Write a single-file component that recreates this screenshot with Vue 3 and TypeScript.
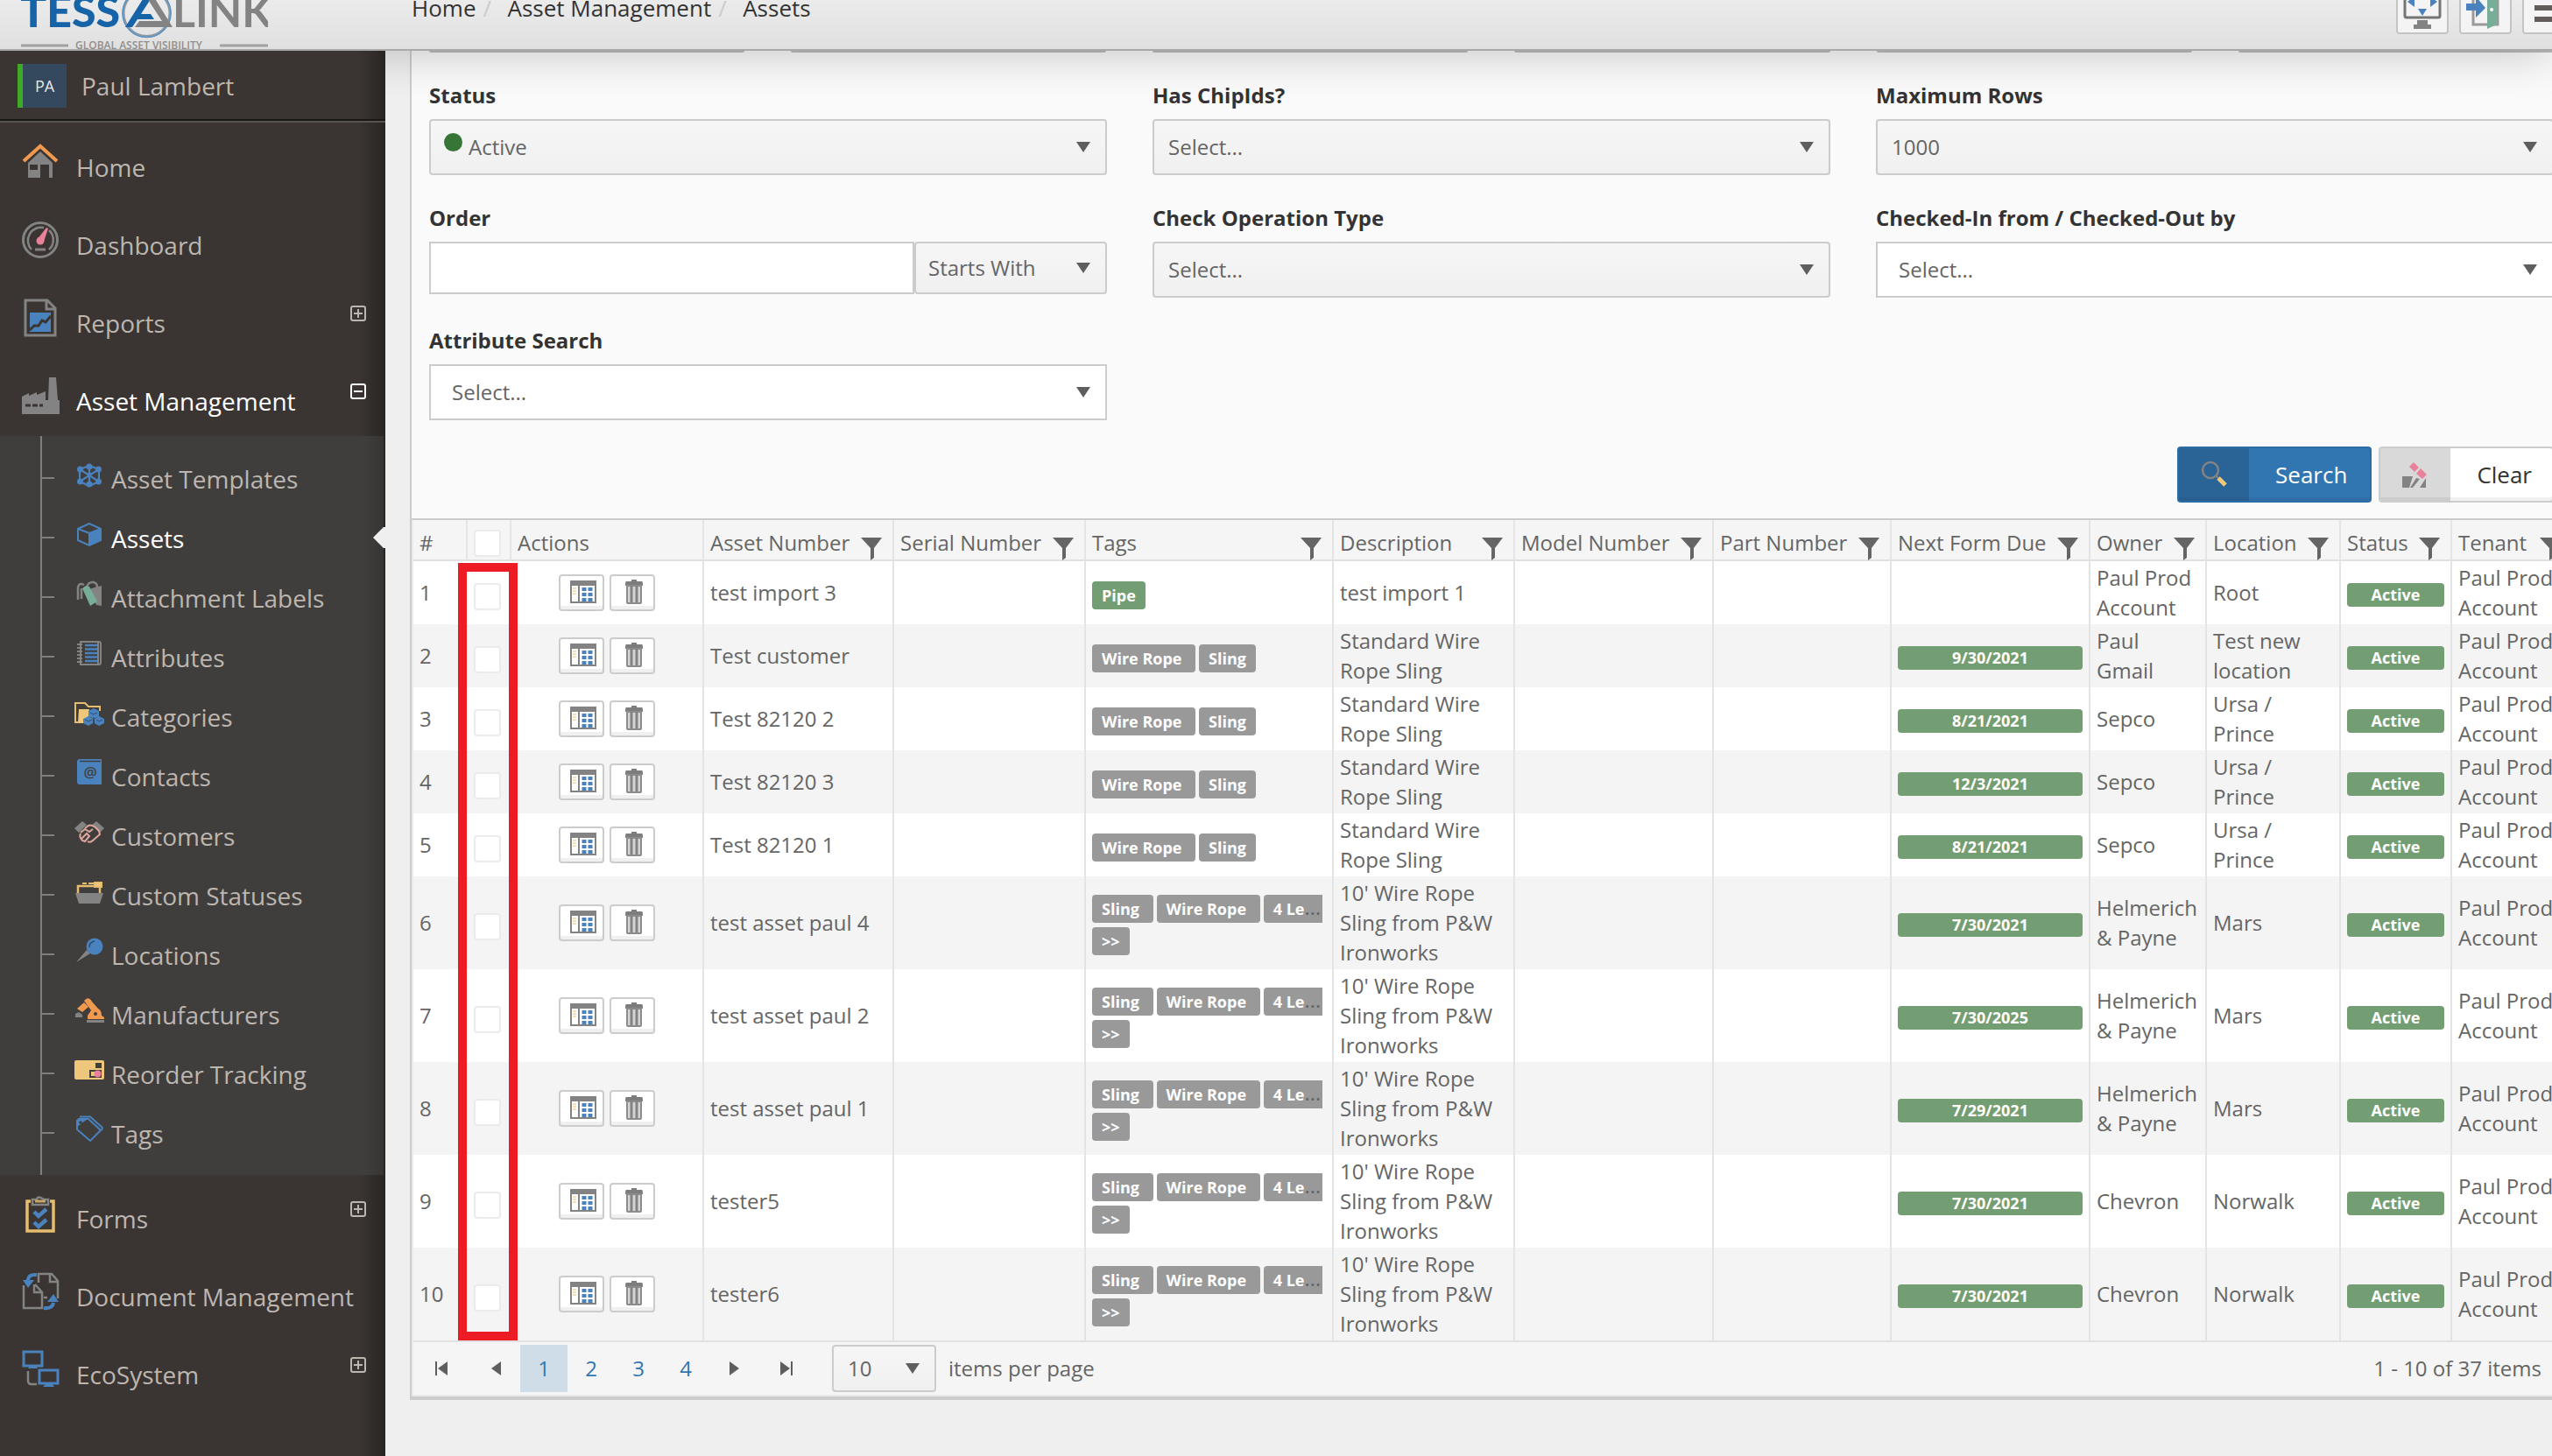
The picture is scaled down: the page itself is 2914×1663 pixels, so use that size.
<script setup lang="ts">
interface NavItem {
  label: string
  icon: string
  toggle?: 'plus' | 'minus'
  active?: boolean
}

interface AssetRow {
  id: number
  name: string
  tags: string[]
  more?: boolean
  green?: boolean
  description: string
  due: string
  owner: string
  location: string
}

const icons: Record<string, string> = {
  home: '<g transform="translate(0,1)"><path d="M2 20 21 3 40 20" fill="none" stroke="#f09a4f" stroke-width="4"/><path fill="#838383" fill-rule="evenodd" d="M21 9 35 22v17h-4V24H21v15H7V22zM9 24v6h9v-6z"/></g>',
  dashboard: '<circle cx="21" cy="22" r="19.5" fill="none" stroke="#838383" stroke-width="3"/><path d="M11 33A15 15 0 0 1 25 8M31 11A15 15 0 0 1 31 33" fill="none" stroke="#838383" stroke-width="2.5"/><path d="M15 33h12" stroke="#838383" stroke-width="3"/><path d="M17 22 28 8 30 9 25 24z" fill="#e8829a"/><circle cx="21" cy="23" r="4.5" fill="#e8829a"/>',
  reports: '<path d="M4 2h25l9 9v31H4z" fill="none" stroke="#838383" stroke-width="3"/><path d="M28 2v10h10" fill="none" stroke="#838383" stroke-width="3"/><path d="M9 16h24v22H9z" fill="#4a82bd"/><path d="M9 36l5-5h5l4-6 4 2 6-7" fill="none" stroke="#3a3532" stroke-width="3"/>',
  factory: '<path d="M0 23 8 19v3l9-4v3l10-4v10h3L31 1h8l2 26h2v16H0z" fill="#838383"/><path d="M4 33h20" stroke="#3a3532" stroke-width="3" stroke-dasharray="6 2"/>',
  forms: '<path d="M10 8H6v34h30V8h-4" fill="none" stroke="#e6bd6f" stroke-width="3.5"/><path d="M12 12V6h5q1-5 8 0h5v6z" fill="none" stroke="#838383" stroke-width="2.5"/><path d="M15 8h12" stroke="#c6a765" stroke-width="3"/><path d="m14 20 5 5 9-8M14 32l5 5 9-8" fill="none" stroke="#4a82bd" stroke-width="4.5"/>',
  documents: '<path d="M2 15v26h21V23l-8-9M14 14v9h9" fill="none" stroke="#838383" stroke-width="2.5"/><path d="M19 12V2h15l7 8v20M32 2v9h9M25 29h4" fill="none" stroke="#838383" stroke-width="2.5"/><path d="M17 3q-10-1-10 7" fill="none" stroke="#4a82bd" stroke-width="4"/><path d="M1 9h13l-7 9z" fill="#4a82bd"/><path d="M25 41q10 1 11-6" fill="none" stroke="#4a82bd" stroke-width="4"/><path d="m29 34 7-9 6 9z" fill="#4a82bd"/>',
  ecosystem: '<path d="M2 2h21v16H2z" fill="none" stroke="#4a82bd" stroke-width="3"/><path d="M7 21h11l-2-3H9zM24 42h13l-2-3h-8z" fill="#4a82bd"/><path d="M20 23h21v15H20z" fill="none" stroke="#4a82bd" stroke-width="3"/><path d="M7 24v11q0 4 4 4h6" fill="none" stroke="#838383" stroke-width="2.5"/>',
  templates: '<path d="M18 8 7 12v14l11 5 11-5V12zM7 12l11 7 11-7M18 19v12M7 26l11-7 11 7M18 8v11" fill="none" stroke="#4a82bd" stroke-width="2.2"/><g fill="#4a82bd"><circle cx="18" cy="9" r="3.5"/><circle cx="7.500" cy="12" r="3.5"/><circle cx="28.500" cy="12" r="3.5"/><circle cx="7.500" cy="26" r="3.5"/><circle cx="28.500" cy="26" r="3.5"/><circle cx="18" cy="29" r="3.5"/><circle cx="18" cy="18" r="2.5"/></g>',
  assets: '<path d="M18 6 5 12v13l13 6 13-6V12zM5 12l13 5 13-5M18 17v14" fill="none" stroke="#4a82bd" stroke-width="2"/><path d="m18 17 13-5v13l-13 6z" fill="#4a82bd"/>',
  labels: '<path d="M5 25V11q1-6 7-3M9 24V12M15 12q1-8 8-7 6 2 3 9" fill="none" stroke="#838383" stroke-width="2.5"/><path d="M24 11l8-2v23l-6-1-8-18z" fill="#838383"/><path d="m10 12 4-3 4 1 9 17-8 5z" fill="#78ae98"/>',
  attributes: '<path d="M8 5h21q2 0 2 2v22q0 2-2 2H8zM28 5v26" fill="none" stroke="#838383" stroke-width="2"/><path d="M4 8h6M4 12h6M4 16h6M4 20h6M4 24h6M4 28h6" stroke="#838383" stroke-width="2"/><path d="M13 9h14M13 13.500h14M13 18h14M13 22.500h14M13 27h14" stroke="#4a82bd" stroke-width="2.500"/>',
  categories: '<path d="M5 29H2V7h11l4 4h13v5" fill="none" stroke="#e6bd6f" stroke-width="2"/><path d="M6 14h12l-2 16H5z" fill="#efc77c"/><path d="m23 13 6 3v6l-6 3-6-3v-6zM17 22l5 3v5l-5 3-6-3v-5zM29 22l6 3v5l-6 3-5-3v-5z" fill="#4a82bd"/><path d="m13 26 4 2 4-2M26 26l3 2 4-2M19 18l4 2 4-2M23 23v9" fill="none" stroke="#2d4f73" stroke-width="1"/>',
  contacts: '<path d="M6 3h26v29H7q-3 0-3-3V5z" fill="#4a82bd"/><path d="M7 5.500h24" stroke="#403e3c" stroke-width="1.500"/><text x="19" y="24" text-anchor="middle" font-family="Open Sans, sans-serif" font-size="17" font-weight="600" fill="#403e3c">@</text>',
  customers: '<path d="m1 14 9-8 5 4-9 9zM35 14l-9-8-5 4 9 9z" fill="#838383"/><path d="m13 14 4-3q5-2 12 6l1 4-8 7q-3 3-6 1M8 19l5-4 5 3 4-3M8 20q-2 4 2 8l3 1 5-6-3-3-6 6" fill="none" stroke="#dfa79b" stroke-width="2"/>',
  statuses: '<path d="M5 20V12h25v8" fill="none" stroke="#e6bd6f" stroke-width="2.500"/><path d="M10 9h5M17 9h6M24 8h8v5h-8z" stroke="#e6bd6f" stroke-width="2" fill="#efc77c"/><path d="M2 20h32l-4 12H6z" fill="#838383"/>',
  locations: '<path d="M3 31 15 17l4 4z" fill="#838383"/><circle cx="24" cy="13" r="9.500" fill="#4a82bd"/><path d="M18 14q0-6 6-7" fill="none" stroke="#294b70" stroke-width="1.500"/>',
  manufacturers: '<path d="m4 16 8-7 5 5-7 6zM12 7q5-6 9 1l7 8q4 2 4 8l3 2v2H16v-4l4-6z" fill="#f09a4f"/><path d="M2 26v-4l4-2 4 3v3M15 29h20v3H15z" fill="#838383"/><circle cx="25" cy="22" r="2" fill="#403e3c"/>',
  reorder: '<rect x="1" y="7" width="34" height="22" rx="2" fill="#efc77c"/><path d="M25 10h7v6h-7zM18 18h14v9H18z" fill="#403e3c"/><path d="M20 20h4v5h-4z" fill="#efc77c"/><circle cx="27.500" cy="22.500" r="4" fill="#e8829a"/>',
  tags: '<path d="M4 8v10l15 13 12-12L17 6H6z" fill="none" stroke="#4a82bd" stroke-width="2"/><path d="M4 15V8l2-2h10z" fill="#4a82bd"/><path d="M7 3.500h12L33 16l-1 3" fill="none" stroke="#4a82bd" stroke-width="2"/><circle cx="8" cy="10" r="1.800" fill="#403e3c"/>'
}

const topItems: NavItem[] = [
  { label: 'Home', icon: 'home' },
  { label: 'Dashboard', icon: 'dashboard' },
  { label: 'Reports', icon: 'reports', toggle: 'plus' },
  { label: 'Asset Management', icon: 'factory', toggle: 'minus', active: true }
]

const subItems: NavItem[] = [
  { label: 'Asset Templates', icon: 'templates' },
  { label: 'Assets', icon: 'assets', active: true },
  { label: 'Attachment Labels', icon: 'labels' },
  { label: 'Attributes', icon: 'attributes' },
  { label: 'Categories', icon: 'categories' },
  { label: 'Contacts', icon: 'contacts' },
  { label: 'Customers', icon: 'customers' },
  { label: 'Custom Statuses', icon: 'statuses' },
  { label: 'Locations', icon: 'locations' },
  { label: 'Manufacturers', icon: 'manufacturers' },
  { label: 'Reorder Tracking', icon: 'reorder' },
  { label: 'Tags', icon: 'tags' }
]

const bottomItems: NavItem[] = [
  { label: 'Forms', icon: 'forms', toggle: 'plus' },
  { label: 'Document Management', icon: 'documents' },
  { label: 'EcoSystem', icon: 'ecosystem', toggle: 'plus' }
]

const columns = [
  { label: 'Asset Number', cls: 'w-asset' },
  { label: 'Serial Number', cls: 'w-serial' },
  { label: 'Tags', cls: 'w-tags' },
  { label: 'Description', cls: 'w-desc' },
  { label: 'Model Number', cls: 'w-model' },
  { label: 'Part Number', cls: 'w-part' },
  { label: 'Next Form Due', cls: 'w-due' },
  { label: 'Owner', cls: 'w-owner' },
  { label: 'Location', cls: 'w-loc' },
  { label: 'Status', cls: 'w-status' },
  { label: 'Tenant', cls: 'w-tenant' }
]

const std = 'Standard Wire Rope Sling'
const ten = "10' Wire Rope Sling from P&W Ironworks"
const pair = ['Wire Rope', 'Sling']
const trio = ['Sling', 'Wire Rope', '4 Legs']

const rows: AssetRow[] = [
  { id: 1, name: 'test import 3', tags: ['Pipe'], green: true, description: 'test import 1', due: '', owner: 'Paul Prod Account', location: 'Root' },
  { id: 2, name: 'Test customer', tags: pair, description: std, due: '9/30/2021', owner: 'Paul Gmail', location: 'Test new location' },
  { id: 3, name: 'Test 82120 2', tags: pair, description: std, due: '8/21/2021', owner: 'Sepco', location: 'Ursa / Prince' },
  { id: 4, name: 'Test 82120 3', tags: pair, description: std, due: '12/3/2021', owner: 'Sepco', location: 'Ursa / Prince' },
  { id: 5, name: 'Test 82120 1', tags: pair, description: std, due: '8/21/2021', owner: 'Sepco', location: 'Ursa / Prince' },
  { id: 6, name: 'test asset paul 4', tags: trio, more: true, description: ten, due: '7/30/2021', owner: 'Helmerich & Payne', location: 'Mars' },
  { id: 7, name: 'test asset paul 2', tags: trio, more: true, description: ten, due: '7/30/2025', owner: 'Helmerich & Payne', location: 'Mars' },
  { id: 8, name: 'test asset paul 1', tags: trio, more: true, description: ten, due: '7/29/2021', owner: 'Helmerich & Payne', location: 'Mars' },
  { id: 9, name: 'tester5', tags: trio, more: true, description: ten, due: '7/30/2021', owner: 'Chevron', location: 'Norwalk' },
  { id: 10, name: 'tester6', tags: trio, more: true, description: ten, due: '7/30/2021', owner: 'Chevron', location: 'Norwalk' }
]

const tagText = (tags: string[], i: number) => (i < tags.length - 1 ? tags[i] + ' ' : tags[i])
</script>

<template>
  <div class="app">
    <header class="topbar">
      <div class="topbar-inner">
        <svg class="logo" viewBox="0 0 282 76" role="img" aria-label="TessaLink">
          <text x="-1" y="51" font-family="Lato, sans-serif" font-size="50" font-weight="900" fill="#1763a8">TESS</text>
          <circle cx="143.500" cy="35" r="26.500" fill="none" stroke="#8d9aa5" stroke-width="3" />
          <circle cx="143.500" cy="35" r="27.500" fill="none" stroke="#5b93c6" stroke-width="1.500" />
          <path d="M119 51 146 8h9l-18 28h11l4 6h-19l-6 9z" fill="#1763a8" />
          <path d="m144 18 5-6 24 39h-43l5-7h26z" fill="#838383" />
          <text x="173" y="51" font-family="Lato, sans-serif" font-size="50" font-weight="700" fill="#838383">LINK</text>
          <text x="62" y="76" font-family="Open Sans, sans-serif" font-size="12" font-weight="600" fill="#8f8f8f">GLOBAL ASSET VISIBILITY</text>
          <path d="M0 72h54M227 72h55" stroke="#a0a0a0" stroke-width="3" />
        </svg>
        <nav class="crumbs" aria-label="Breadcrumb">
          <a href="#">Home</a><i>/</i><a href="#">Asset Management</a><i>/</i><a href="#">Assets</a>
        </nav>
        <div class="tools">
          <button type="button" aria-label="Full screen">
            <svg viewBox="0 0 56 56">
              <path d="M8 4v26q0 2 2 2h36q2 0 2-2V4" transform="translate(0,10)" fill="none" stroke="#757575" stroke-width="3" />
              <path d="M22 45h12v5h4v5H18v-5h4z" fill="#838383" />
              <path d="m11 24 8-6v12zM45 24l-8-6v12zM28 40l-5-8h10z" fill="#4a82bd" />
            </svg>
          </button>
          <button type="button" aria-label="Sign out">
            <svg viewBox="0 0 56 56">
              <path d="M14 14v36h28V14" fill="none" stroke="#9a9a9a" stroke-width="3" />
              <path d="M30 10h11v40l-11 5z" fill="#78ae98" />
              <path d="M6 26h11v-8l11 13-11 11v-8H6z" fill="#4a82bd" />
              <circle cx="35" cy="33" r="2" fill="#fff" />
            </svg>
          </button>
          <button type="button" aria-label="Menu">
            <svg viewBox="0 0 56 56">
              <path d="M12 18h32M12 31h32M12 44h32" stroke="#625d5a" stroke-width="6" />
            </svg>
          </button>
        </div>
      </div>
    </header>

    <div class="body">
      <aside class="sidebar">
        <div class="user">
          <span class="avatar">PA</span>
          <span>Paul Lambert</span>
        </div>
        <nav class="nav" aria-label="Main">
          <a v-for="n in topItems" :key="n.label" href="#" class="nav-item" :class="{ on: n.active }">
            <svg class="nav-icon" viewBox="-1 0 44 44" v-html="icons[n.icon]" />
            <span class="nav-text">{{ n.label }}</span>
            <svg v-if="n.toggle" class="toggle" viewBox="0 0 18 18">
              <rect x="1" y="1" width="16" height="16" rx="2" /><path d="M4 9h10" /><path v-if="n.toggle === 'plus'" d="M9 4v10" />
            </svg>
          </a>
        </nav>
        <nav class="subnav" aria-label="Asset Management">
          <a v-for="n in subItems" :key="n.label" href="#" class="sub-item" :class="{ on: n.active }">
            <svg class="sub-icon" viewBox="0 0 36 36" v-html="icons[n.icon]" />
            <span class="sub-text">{{ n.label }}</span>
          </a>
        </nav>
        <nav class="nav lower" aria-label="More">
          <a v-for="n in bottomItems" :key="n.label" href="#" class="nav-item">
            <svg class="nav-icon" viewBox="-1 0 44 44" v-html="icons[n.icon]" />
            <span class="nav-text">{{ n.label }}</span>
            <svg v-if="n.toggle" class="toggle" viewBox="0 0 18 18">
              <rect x="1" y="1" width="16" height="16" rx="2" /><path d="M4 9h10" /><path d="M9 4v10" />
            </svg>
          </a>
        </nav>
      </aside>

      <main class="main">
        <section class="panel">
          <form class="filters" @submit.prevent>
            <div class="cut-row"><span v-for="i in 6" :key="i" /></div>
            <div class="grid">
              <div class="field">
                <label for="status">Status</label>
                <div class="pick dot"><select id="status"><option>Active</option></select></div>
              </div>
              <div class="field">
                <label for="chip">Has ChipIds?</label>
                <div class="pick"><select id="chip"><option>Select...</option></select></div>
              </div>
              <div class="field">
                <label for="max">Maximum Rows</label>
                <div class="pick"><select id="max"><option>1000</option></select></div>
              </div>
              <div class="field">
                <label for="order">Order</label>
                <div class="combo">
                  <input id="order" type="text" />
                  <div class="pick short"><select aria-label="Order match"><option>Starts With</option></select></div>
                </div>
              </div>
              <div class="field">
                <label for="op">Check Operation Type</label>
                <div class="pick"><select id="op"><option>Select...</option></select></div>
              </div>
              <div class="field">
                <label for="checked">Checked-In from / Checked-Out by</label>
                <div class="pick white"><select id="checked"><option>Select...</option></select></div>
              </div>
              <div class="field">
                <label for="attr">Attribute Search</label>
                <div class="pick white"><select id="attr"><option>Select...</option></select></div>
              </div>
            </div>
            <div class="actions">
              <button type="submit" class="btn primary">
                <span class="btn-icon">
                  <svg viewBox="0 0 32 32"><ellipse cx="12" cy="11" rx="9" ry="9" fill="none" stroke="#838383" stroke-width="2.500" /><path d="m18 17 3 3" stroke="#838383" stroke-width="2" /><path d="m21 20 8 8" stroke="#efc77c" stroke-width="5" /></svg>
                </span>
                <span class="btn-text">Search</span>
              </button>
              <button type="reset" class="btn plain">
                <span class="btn-icon">
                  <svg viewBox="0 0 32 32"><path d="M1 18h12L9 31H1zM17 20l4 1-8 10h-3zM28 20v11h-7z" fill="#838383" /><path d="m14 2 6 6-5 5-6-6zM22 9l7 7-5 5-7-6z" fill="#e8829a" /></svg>
                </span>
                <span class="btn-text">Clear</span>
              </button>
            </div>
          </form>

          <div class="gridbox">
            <div class="table-wrap">
              <table>
                <colgroup>
                  <col class="w-num" /><col class="w-check" /><col class="w-actions" />
                  <col v-for="c in columns" :key="c.label" :class="c.cls" />
                </colgroup>
                <thead>
                  <tr>
                    <th scope="col">#</th>
                    <th scope="col" class="check"><input type="checkbox" aria-label="Select all" /></th>
                    <th scope="col">Actions</th>
                    <th v-for="c in columns" :key="c.label" scope="col">
                      <div class="head">
                        <span>{{ c.label }}</span>
                        <svg class="funnel" viewBox="0 0 24 26"><path d="M0 0h24l-9 12v11l-4 3V12z" fill="#656565" /></svg>
                      </div>
                    </th>
                  </tr>
                </thead>
                <tbody>
                  <tr v-for="r in rows" :key="r.id">
                    <td>{{ r.id }}</td>
                    <td class="check"><input type="checkbox" :aria-label="'Select ' + r.name" /></td>
                    <td class="noline">
                      <div class="row-actions">
                        <button type="button" aria-label="Details">
                          <svg class="ic-details" viewBox="0 0 30 26"><path d="M1 1h28v24H1z" fill="#fff" stroke="#838383" stroke-width="2" /><path d="M0 0h30v6H0zM9 5h2v21H9z" fill="#838383" /><path d="M3 9h4M3 12h4M3 15h4" stroke="#e6bd6f" /><path d="M16 8v16M23 8v16" stroke="#4a82bd" stroke-width="5" stroke-dasharray="4 2" /></svg>
                        </button>
                        <button type="button" aria-label="Delete">
                          <svg class="ic-trash" viewBox="0 0 22 28"><path d="M8 0h6v2h6q1 0 1 5H1q0-5 1-5h6z" fill="#7d7d7d" /><path d="M3 7h16v19q0 1-1 1H4q-1 0-1-1z" fill="#d4d4d4" stroke="#8c8c8c" stroke-width="2" /><path d="M8 7v19M14 7v19" stroke="#838383" stroke-width="3" /></svg>
                        </button>
                      </div>
                    </td>
                    <td>{{ r.name }}</td>
                    <td></td>
                    <td class="tag-cell">
                      <div class="tags"><span v-for="(t, i) in r.tags" :key="t" class="tag" :class="{ green: r.green }">{{ tagText(r.tags, i) }}</span></div>
                      <div v-if="r.more" class="tags"><a href="#" class="tag">&gt;&gt;</a></div>
                    </td>
                    <td>{{ r.description }}</td>
                    <td></td>
                    <td></td>
                    <td><span v-if="r.due" class="badge">{{ r.due }}</span></td>
                    <td>{{ r.owner }}</td>
                    <td>{{ r.location }}</td>
                    <td><span class="badge">Active</span></td>
                    <td>Paul Prod Account</td>
                  </tr>
                </tbody>
              </table>
              <div class="marker"></div>
            </div>
            <div class="pager">
              <button type="button" class="wide" aria-label="First page"><svg viewBox="0 0 16 16"><path d="M1 0h2v16H1zM15 0v16L4 8z" /></svg></button>
              <button type="button" class="wide" aria-label="Previous page"><svg viewBox="0 0 16 16"><path d="M16 0v16L5 8z" /></svg></button>
              <button type="button" class="current">1</button>
              <button type="button">2</button>
              <button type="button">3</button>
              <button type="button">4</button>
              <button type="button" aria-label="Next page"><svg viewBox="0 0 16 16"><path d="M4 0v16l11-8z" /></svg></button>
              <button type="button" class="last" aria-label="Last page"><svg viewBox="0 0 16 16"><path d="M13 0h2v16h-2zM1 0v16l11-8z" /></svg></button>
              <div class="pick size"><select id="size"><option>10</option></select></div>
              <label for="size">items per page</label>
              <span class="range">1 - 10 of 37 items</span>
            </div>
          </div>
        </section>
      </main>
    </div>
  </div>
</template>

<style>
body {
  background: #efefef;
  overflow: hidden;
}
</style>

<style scoped>
* {
  box-sizing: border-box;
}

.app {
  display: flex;
  flex-direction: column;
  min-height: 100vh;
  overflow: hidden;
  font-family: "Open Sans", "Noto Sans", sans-serif;
  font-size: 24px;
  line-height: 34px;
  color: #656565;
}

a {
  color: inherit;
  text-decoration: none;
}

button,
select,
input {
  font: inherit;
  color: inherit;
  margin: 0;
}

/* Top bar */
.topbar {
  position: relative;
  z-index: 3;
  height: 58px;
  display: flex;
  align-items: flex-end;
  background: linear-gradient(#ebebeb, #e0e0e0);
  border-bottom: 2px solid #a9a9a9;
  box-shadow: 0 4px 52px rgba(0, 0, 0, 0.21);
  clip-path: inset(0 0 -80px 0);
}

.topbar-inner {
  flex: 1;
  display: flex;
  align-items: flex-end;
  height: 76px;
  margin: -20px -26px 0 0;
}

.logo {
  width: 282px;
  height: 76px;
  margin-left: 24px;
  overflow: hidden;
}

.crumbs {
  display: flex;
  margin: 0 0 30px 164px;
  font-size: 26px;
  color: #333;
}

.crumbs i {
  width: 36px;
  padding-left: 8px;
  font-style: normal;
  color: #ccc;
}

.tools {
  display: flex;
  gap: 12px;
  margin: 0 0 17px auto;
}

.tools button {
  width: 60px;
  height: 60px;
  padding: 0;
  border: 2px solid #c4c4c4;
  border-radius: 4px;
  background: #f4f4f4;
}

.tools svg {
  display: block;
  width: 56px;
  height: 56px;
  margin-top: -6px;
}

.body {
  flex: 1;
  display: flex;
}

/* Sidebar */
.sidebar {
  position: relative;
  z-index: 4;
  flex: none;
  width: 440px;
  background: linear-gradient(90deg, transparent 410px, rgba(0, 0, 0, 0.3)), #3a3532;
  color: #bdb6b0;
  font-size: 28px;
  line-height: 38px;
}

.user {
  display: flex;
  align-items: center;
  gap: 17px;
  height: 82px;
  padding: 0 0 0 20px;
  border-bottom: 2px solid #565453;
  box-shadow: inset 0 -2px #1a1715;
}

.avatar {
  width: 56px;
  height: 50px;
  border-left: 6px solid #3fab25;
  background: #34495e;
  color: #e8e8e8;
  font-size: 18px;
  line-height: 50px;
  text-align: center;
}

.nav {
  padding: 1px 0;
}

.nav.lower {
  padding: 0;
}

.nav-item {
  display: flex;
  align-items: center;
  height: 89px;
  padding: 0 22px 0 24px;
}

.nav-icon {
  width: 44px;
  height: 44px;
  margin-bottom: 2px;
}

.nav-text {
  flex: 1;
  padding: 10px 0 0 19px;
  white-space: nowrap;
}

.on .nav-text,
.on .sub-text {
  color: #fff;
}

.toggle {
  width: 18px;
  height: 18px;
  margin-bottom: 12px;
  fill: none;
  stroke: #bdb6b0;
  stroke-width: 2;
}

.on .toggle {
  stroke: #fff;
}

.subnav {
  position: relative;
  margin-right: 2px;
  padding: 14px 0;
  background: linear-gradient(90deg, transparent 416px, rgba(0, 0, 0, 0.14)), #403e3c;
}

.subnav::before {
  content: "";
  position: absolute;
  left: 46px;
  top: 0;
  bottom: 0;
  width: 2px;
  background: #7f7f7f;
}

.sub-item {
  position: relative;
  display: flex;
  align-items: center;
  height: 68px;
  padding-left: 48px;
}

.sub-item::before {
  content: "";
  width: 14px;
  height: 2px;
  background: #7f7f7f;
}

.sub-item.on::after {
  content: "";
  position: absolute;
  right: -2px;
  top: 22px;
  width: 14px;
  height: 24px;
  background: #efefef;
  clip-path: polygon(0 50%, 85% 0, 100% 0, 100% 100%, 85% 100%);
}

.sub-icon {
  width: 36px;
  height: 36px;
  margin: 0 7px 8px 22px;
}

.sub-text {
  padding-top: 2px;
}

/* Content */
.main {
  flex: 1;
  min-width: 0;
  padding-left: 28px;
}

.panel {
  margin-right: -24px;
  border: 2px solid #ccc;
  border-width: 0 2px 4px;
  background: #fafafa;
}

.filters {
  padding: 0 20px 18px;
}

.cut-row {
  display: grid;
  grid-template-columns: repeat(6, 1fr);
  gap: 53px;
}

.cut-row span {
  height: 2px;
  border-radius: 0 0 4px 4px;
  background: #bbb;
}

.grid {
  display: grid;
  grid-template-columns: repeat(3, 1fr);
  gap: 32px 52px;
  padding-top: 32px;
}

.field {
  display: flex;
  flex-direction: column;
  gap: 10px;
}

.field label {
  font-weight: 700;
  color: #333;
}

.pick {
  position: relative;
  height: 64px;
}

.pick select {
  display: block;
  width: 100%;
  height: 100%;
  padding: 0 48px 0 16px;
  border: 2px solid #ccc;
  border-radius: 4px;
  background: linear-gradient(#f6f6f6, #f0f0f0);
  appearance: none;
}

.pick::after {
  content: "";
  position: absolute;
  right: 19px;
  top: calc(50% - 6px);
  width: 16px;
  height: 12px;
  background: #5e5e5e;
  clip-path: polygon(0 0, 100% 0, 50% 100%);
}

.pick.white select {
  padding-left: 24px;
  border-radius: 0;
  background: #fff;
}

.pick.dot select {
  padding-left: 43px;
}

.pick.dot::before {
  content: "";
  position: absolute;
  left: 17px;
  top: 16px;
  width: 21px;
  height: 21px;
  border-radius: 50%;
  background: #367535;
}

.combo {
  display: flex;
}

.combo input {
  flex: 1;
  min-width: 0;
  height: 60px;
  border: 2px solid #ccc;
  background: #fff;
}

.pick.short {
  width: 220px;
  height: 60px;
}

.pick.short select {
  padding-left: 14px;
}

.actions {
  display: flex;
  justify-content: flex-end;
  gap: 8px;
  padding-top: 30px;
}

.btn {
  display: flex;
  align-items: stretch;
  height: 64px;
  padding: 0;
  border: 2px solid #ccc;
  border-radius: 4px;
  overflow: hidden;
  background: #fff;
  color: #333;
  font-size: 26px;
  box-shadow: inset 0 -4px rgba(0, 0, 0, 0.06);
}

.btn.primary {
  border-color: #2a6ca6;
  background: #3276b1;
  color: #fff;
}

.btn-icon {
  display: flex;
  align-items: center;
  justify-content: center;
  width: 80px;
  background: rgba(0, 0, 0, 0.15);
}

.btn-icon svg {
  width: 32px;
  height: 32px;
}

.btn-text {
  align-self: center;
  padding: 0 26px 0 30px;
}

.plain .btn-text {
  padding-right: 23px;
}

/* Data grid */
.gridbox {
  border-top: 2px solid #ccc;
  background: #f5f5f5;
  box-shadow: inset 2px 0 #ebebeb;
  padding-left: 2px;
  border-bottom: 2px solid #e8e8e8;
}

.table-wrap {
  position: relative;
}

table {
  width: 100%;
  table-layout: fixed;
  border-collapse: separate;
  border-spacing: 0;
}

.w-num { width: 60px; }
.w-check { width: 50px; }
.w-actions { width: 220px; }
.w-asset { width: 217px; }
.w-serial { width: 219px; }
.w-tags { width: 283px; }
.w-desc { width: 207px; }
.w-model { width: 227px; }
.w-part { width: 203px; }
.w-due { width: 227px; }
.w-owner { width: 133px; }
.w-loc { width: 153px; }
.w-status { width: 127px; }

th,
td {
  text-align: left;
  font-weight: 400;
  border-left: 2px solid #e4e4e4;
}

th {
  padding: 9px 0 2px 7px;
  border-bottom: 2px solid #e1e1e1;
}

td {
  padding: 2px 7px;
}

td.tag-cell {
  padding-right: 11px;
}

th:first-child,
td:first-child {
  border-left: 0;
}

td.check,
td.noline {
  border-left-color: transparent;
}

tbody tr {
  height: 72px;
  background: #fff;
}

tbody tr:nth-child(even) {
  background: #f4f4f4;
}

.head {
  display: flex;
  justify-content: space-between;
  align-items: flex-end;
  padding-right: 12px;
  white-space: nowrap;
}

.funnel {
  flex: none;
  width: 24px;
  height: 26px;
  margin-bottom: -3px;
}

input[type="checkbox"] {
  display: block;
  width: 31px;
  height: 31px;
  border: 2px solid #ebebeb;
  border-radius: 4px;
  background: #fff;
  appearance: none;
}

td.check input {
  margin-top: 8px;
}

.row-actions {
  display: flex;
  justify-content: center;
  gap: 6px;
}

.row-actions button {
  display: flex;
  justify-content: center;
  align-items: center;
  width: 52px;
  height: 42px;
  padding: 0 0 2px 3px;
  border: 2px solid #ccc;
  border-radius: 4px;
  background: #fff;
  box-shadow: inset 0 -4px #f0f0f0;
}

.ic-details {
  width: 30px;
  height: 26px;
}

.ic-trash {
  width: 22px;
  height: 28px;
}

.tags {
  overflow: hidden;
  white-space: pre;
  text-overflow: ellipsis;
  line-height: 37px;
}

.tag {
  margin-right: 4px;
  padding: 4px 11px;
  border-radius: 4px;
  background: #999;
  color: #fff;
  font-size: 18px;
  line-height: 24px;
  font-weight: 700;
}

.tag:last-child {
  margin-right: 0;
}

.tag.green,
.badge {
  background: #739e73;
}

.badge {
  display: block;
  margin-top: 4px;
  border-radius: 4px;
  color: #fff;
  font-size: 18px;
  font-weight: 700;
  line-height: 27px;
  text-align: center;
}

.marker {
  position: absolute;
  left: 51px;
  top: 49px;
  bottom: 0;
  width: 68px;
  border: 10px solid #ed1c24;
  pointer-events: none;
}

.pager {
  display: flex;
  align-items: center;
  padding: 3px 34px 3px 2px;
  border-top: 2px solid #e1e1e1;
}

.pager button {
  width: 54px;
  height: 54px;
  padding: 0;
  border: 0;
  background: none;
  color: #3276b1;
}

.pager .wide {
  width: 60px;
}

.pager .last {
  width: 68px;
}

.pager .current {
  background: #cfdde9;
}

.pager svg {
  display: block;
  width: 16px;
  height: 16px;
  margin: 0 auto;
  fill: #5e5e5e;
}

.pick.size {
  width: 119px;
  height: 54px;
  margin: 0 14px 0 18px;
}

.range {
  margin-left: auto;
}
</style>
